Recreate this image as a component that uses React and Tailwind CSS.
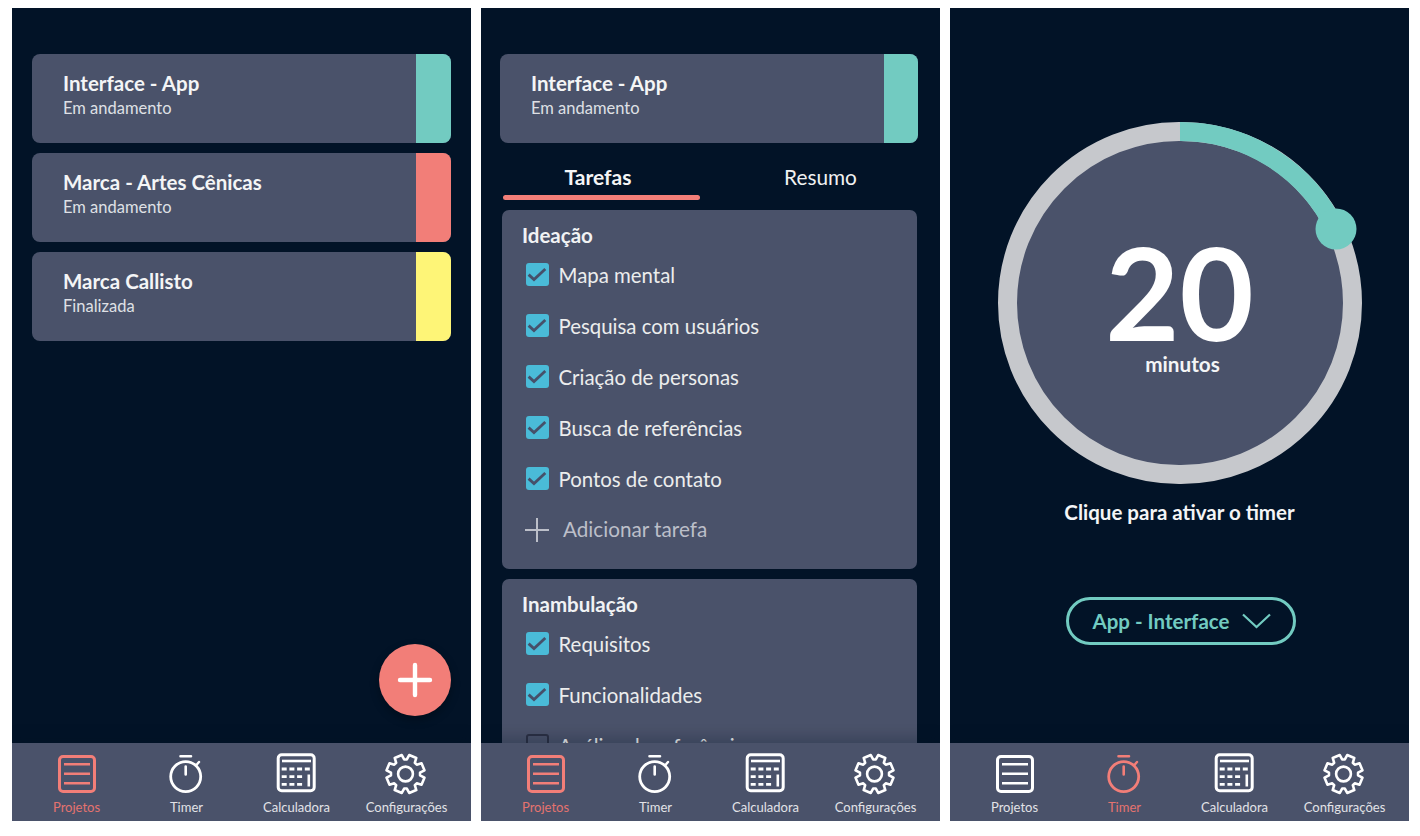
import React from "react";

const gearPath = (() => {
  const cx = 20.5, cy = 22, n = 8, tip = 19.3, root = 14.6;
  const pts = [];
  for (let i = 0; i < n; i++) {
    const a = (i * 2 * Math.PI) / n - Math.PI / 2 + Math.PI / 8;
    const w1 = 0.26, w2 = 0.14;
    const p = (r, t) => [cx + r * Math.cos(t), cy + r * Math.sin(t)];
    pts.push(p(root, a - w1 - 0.04), p(tip, a - w2 - 0.06), p(tip, a + w2 + 0.06), p(root, a + w1 + 0.04));
  }
  return "M" + pts.map((q) => q[0].toFixed(2) + " " + q[1].toFixed(2)).join("L") + "Z";
})();

function ListIcon({ color }) {
  return (
    <svg width="44" height="44" viewBox="0 0 44 44" fill="none" stroke={color}>
      <rect x="4.5" y="4.5" width="35" height="35" rx="3.5" strokeWidth="3" />
      <path d="M9 12.2H35M9 21.8H35M9 31.3H35" strokeWidth="2.6" />
    </svg>
  );
}

function TimerIcon({ color }) {
  return (
    <svg width="44" height="44" viewBox="0 0 44 44" fill="none" stroke={color} strokeLinecap="round">
      <circle cx="20.7" cy="24.6" r="15" strokeWidth="2.8" />
      <path d="M15.5 4.2H26M20.7 14.5V22.5" strokeWidth="2.6" />
      <path d="M31 13.5L34 10" strokeWidth="2.4" />
    </svg>
  );
}

function CalcIcon({ color }) {
  const dashes = [];
  [17, 24.7, 32.3].forEach((y, r) => {
    [6.7, 14.4, 22.1, 29.8].forEach((x, c) => {
      if (r === 0 || c < 3) dashes.push(`M${x} ${y}H${x + 5}`);
    });
  });
  return (
    <svg width="44" height="44" viewBox="0 0 44 44" fill="none" stroke={color}>
      <rect x="3.2" y="2.8" width="36" height="36" rx="3.5" strokeWidth="3" />
      <path d="M7 9H36" strokeWidth="2.6" />
      <path d={dashes.join("")} strokeWidth="2.8" />
      <path d="M33.8 22.5V34.5" strokeWidth="2.6" />
    </svg>
  );
}

function GearIcon({ color }) {
  return (
    <svg width="44" height="44" viewBox="0 0 44 44" fill="none" stroke={color} strokeLinejoin="round">
      <path d={gearPath} strokeWidth="2.6" />
      <circle cx="20.5" cy="22" r="7.4" strokeWidth="2.6" />
    </svg>
  );
}

function NavBar({ active }) {
  const items = [
    ["Projetos", ListIcon],
    ["Timer", TimerIcon],
    ["Calculadora", CalcIcon],
    ["Configurações", GearIcon],
  ];
  return (
    <nav className="relative z-10 grid h-[78px] shrink-0 grid-cols-4 bg-[#4a526a] pr-[9px] pl-[10px] pt-[9px] shadow-[0_-6px_12px_rgba(2,18,38,0.22)]">
      {items.map(([label, Icon]) => {
        const on = label === active;
        return (
          <div key={label} className="flex flex-col items-center">
            <Icon color={on ? "#f27e78" : "#ffffff"} />
            <span className={`mt-[3px] ml-[-1px] text-[13px] leading-[16px] whitespace-nowrap ${on ? "text-[#e5736f]" : "text-[#e2e3e7]"}`}>
              {label}
            </span>
          </div>
        );
      })}
    </nav>
  );
}

function ProjectCard({ title, status, color, accent = "w-[35px]" }) {
  return (
    <div className="flex h-[89px] overflow-hidden rounded-[8px] bg-[#4a526a]">
      <div className="flex-1 pt-[17px] pl-[31px]">
        <div className="text-[20.5px] leading-[25px] font-bold text-[#f4f5f6]">{title}</div>
        <div className="mt-[1px] text-[16.5px] leading-[22px] text-[#dfe0e5]">{status}</div>
      </div>
      <div className={`${accent} ${color}`} />
    </div>
  );
}

function CheckRow({ label, checked = true }) {
  return (
    <div className="flex h-[23px] items-center gap-[10px]">
      {checked ? (
        <div className="flex h-[23px] w-[23px] items-center justify-center rounded-[3px] bg-[#4abbd8]">
          <svg width="23" height="23" viewBox="0 0 23 23" fill="none" stroke="#46506a" strokeWidth="2.8">
            <path d="M2.6 11.6L8 16.6L19.3 6" />
          </svg>
        </div>
      ) : (
        <div className="h-[23px] w-[23px] rounded-[3px] border-2 border-[#2b3044]" />
      )}
      <span className="ml-[-0.5px] pt-[2px] text-[20.4px] leading-[23px] text-[#eceded]">{label}</span>
    </div>
  );
}

function Panel({ title, children, className }) {
  return (
    <section className={`rounded-[7px] bg-[#4a526a] pt-[12px] pl-[20px] ${className}`}>
      <h2 className="pt-[1px] text-[20.5px] leading-[25px] font-bold text-[#f1f2f4]">{title}</h2>
      <div className="mt-[15px] flex flex-col gap-[28px] pl-[4px]">{children}</div>
    </section>
  );
}

function ScreenProjects() {
  return (
    <div className="flex h-[813px] w-[459px] flex-col overflow-hidden bg-[#021327]">
      <div className="relative flex-1 px-[20px] pt-[46px]">
        <div className="flex flex-col gap-[10px]">
          <ProjectCard title="Interface - App" status="Em andamento" color="bg-[#72cbc1]" />
          <ProjectCard title="Marca - Artes Cênicas" status="Em andamento" color="bg-[#f27e78]" />
          <ProjectCard title="Marca Callisto" status="Finalizada" color="bg-[#fef577]" />
        </div>
        <button className="absolute right-[20px] bottom-[27px] flex h-[72px] w-[72px] items-center justify-center rounded-full bg-[#f27e78] shadow-[0_4px_10px_rgba(0,0,0,0.3)]">
          <svg width="36" height="36" viewBox="0 0 36 36" stroke="#ffffff" strokeWidth="4.4" strokeLinecap="round">
            <path d="M18 3V33M3 18H33" />
          </svg>
        </button>
      </div>
      <NavBar active="Projetos" />
    </div>
  );
}

function ScreenTasks() {
  return (
    <div className="flex h-[813px] w-[459px] flex-col overflow-hidden bg-[#021327]">
      <div className="flex-1 overflow-hidden pt-[46px]">
        <div className="mr-[22px] ml-[19px]">
          <ProjectCard title="Interface - App" status="Em andamento" color="bg-[#72cbc1]" accent="w-[34px]" />
        </div>
        <div className="mt-[21px] ml-[22px] flex w-[416px] gap-[22px]">
          <div className="flex-1">
            <div className="pr-[7px] text-center text-[21px] leading-[26px] font-bold text-[#f4f5f6]">Tarefas</div>
            <div className="mt-[5px] h-[5px] rounded-full bg-[#f27e78]" />
          </div>
          <div className="flex-1 text-center text-[20.8px] leading-[26px] text-[#f0f1f2]">Resumo</div>
        </div>
        <div className="mt-[10px] ml-[21px] flex w-[415px] flex-col gap-[10px]">
          <Panel title="Ideação" className="pb-[28px]">
            <CheckRow label="Mapa mental" />
            <CheckRow label="Pesquisa com usuários" />
            <CheckRow label="Criação de personas" />
            <CheckRow label="Busca de referências" />
            <CheckRow label="Pontos de contato" />
            <div className="ml-[-1px] flex h-[23px] items-center gap-[14px]">
              <svg width="24" height="24" viewBox="0 0 24 24" stroke="#bcbfc9" strokeWidth="2">
                <path d="M12 0V24M0 12H24" />
              </svg>
              <span className="text-[20.7px] leading-[23px] text-[#bcbfc9]">Adicionar tarefa</span>
            </div>
          </Panel>
          <Panel title="Inambulação" className="pb-[27px]">
            <CheckRow label="Requisitos" />
            <CheckRow label="Funcionalidades" />
            <CheckRow label="Análise de referências" checked={false} />
          </Panel>
        </div>
      </div>
      <NavBar active="Projetos" />
    </div>
  );
}

function ScreenTimer() {
  return (
    <div className="flex h-[813px] w-[459px] flex-col overflow-hidden bg-[#021327]">
      <div className="flex flex-1 flex-col items-center pt-[114px]">
        <div className="relative h-[362px] w-[364px] rounded-full border-[19px] border-[#c6c8cc] bg-[#4a526a]">
          <div className="flex h-full flex-col items-center pt-[86px]">
            <div className="text-[128px] leading-[130px] font-bold text-white">20</div>
            <div className="mt-[-5px] ml-[6px] text-[20.7px] leading-[24px] font-bold text-[#f4f5f6]">minutos</div>
          </div>
          <svg className="absolute top-[-19px] left-[-19px] overflow-visible" width="364" height="362" viewBox="0 0 364 362" fill="none">
            <path d="M182 9.5A172 171.5 0 0 1 337.6 107.5" stroke="#72cbc1" strokeWidth="19" />
            <circle cx="338" cy="107" r="20.5" fill="#72cbc1" />
          </svg>
        </div>
        <div className="mt-[16px] text-[20.5px] leading-[24px] font-bold text-[#f4f5f6]">Clique para ativar o timer</div>
        <div className="mt-[73px] ml-[2px] flex h-[48px] w-[230px] items-center gap-[13px] rounded-full border-[3px] border-[#72cbc1] pl-[24px]">
          <span className="text-[20.5px] leading-[24px] font-bold text-[#72cbc1]">App - Interface</span>
          <svg width="29" height="16" viewBox="0 0 29 16" fill="none" stroke="#72cbc1" strokeWidth="2.2">
            <path d="M1 1.5L14.5 14L28 1.5" />
          </svg>
        </div>
      </div>
      <NavBar active="Timer" />
    </div>
  );
}

export default function App() {
  return (
    <div className="flex h-[836px] w-[1420px] gap-[10px] overflow-hidden bg-white pt-[8px] pl-[12px] font-['Lato',sans-serif]">
      <ScreenProjects />
      <ScreenTasks />
      <ScreenTimer />
    </div>
  );
}
